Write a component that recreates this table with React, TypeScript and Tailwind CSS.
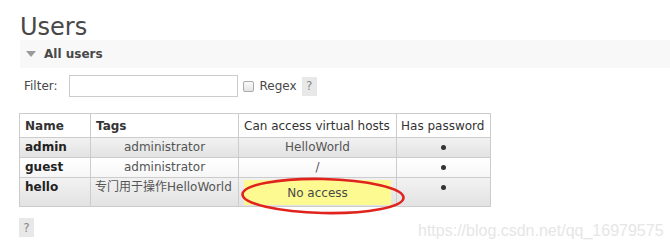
import React from "react";

type UserRow = {
  name: string;
  tags: string;
  vhost: string | null;
  alt: boolean;
};

const users: UserRow[] = [
  { name: "admin", tags: "administrator", vhost: "HelloWorld", alt: true },
  { name: "guest", tags: "administrator", vhost: "/", alt: false },
  { name: "hello", tags: "专门用于操作HelloWorld", vhost: null, alt: true },
];

const font = { fontFamily: '"DejaVu Sans", Verdana, "Noto Sans CJK SC", sans-serif' };

function HelpBox() {
  return (
    <span className="inline-flex h-[19px] w-[15px] items-center justify-center bg-[#e8e8e8] text-[12px] text-[#888]">
      ?
    </span>
  );
}

export default function App() {
  return (
    <div className="relative h-[248px] w-[670px] overflow-hidden bg-white text-[12px] text-[#484848]" style={font}>
      <div className="pl-5 pt-[15px]">
        <h1 className="text-[24px] leading-[25px] text-[#484848]">Users</h1>

        {/* collapsible section header */}
        <div className="flex h-[28px] items-center bg-[#f8f8f8]">
          <svg width="10" height="6" viewBox="0 0 10 6" className="ml-[6px]">
            <polygon points="0,0 10,0 5,6" fill="#9a9a9a" />
          </svg>
          <span className="ml-[8px] text-[12px] font-bold text-[#484848]">All users</span>
        </div>

        {/* filter row */}
        <div className="mt-[7px] flex h-[22px] items-center">
          <span className="ml-[4px] text-[12px]">Filter:</span>
          <input className="ml-[11px] h-[22px] w-[169px] border border-[#ccc] bg-white" />
          <span className="ml-[5px] inline-block h-[11px] w-[11px] rounded-[2px] border border-[#aaa] bg-gradient-to-b from-[#fafafa] to-[#e4e4e4]" />
          <span className="ml-[6px]">Regex</span>
          <span className="ml-[5px] flex">
            <HelpBox />
          </span>
        </div>

        {/* users table */}
        <table className="mt-[16px] -ml-px table-fixed border-collapse text-[12px]">
          <colgroup>
            <col className="w-[71px]" />
            <col className="w-[148px]" />
            <col className="w-[158px]" />
            <col className="w-[94px]" />
          </colgroup>
          <thead>
            <tr className="h-[24px] bg-white">
              <th className="border border-[#ccc] px-[5px] text-left font-bold text-[#333]">Name</th>
              <th className="border border-[#ccc] px-[5px] text-left font-bold text-[#333]">Tags</th>
              <th className="border border-[#ccc] px-[5px] text-left font-normal text-[#333]">Can access virtual hosts</th>
              <th className="border border-[#ccc] px-[4px] text-left font-normal text-[#333]">Has password</th>
            </tr>
          </thead>
          <tbody>
            {users.map((u) => (
              <tr
                key={u.name}
                className={
                  u.alt
                    ? "bg-gradient-to-b from-[#f2f2f2] to-[#e2e2e2]"
                    : "bg-gradient-to-b from-white to-[#f6f6f6]"
                }
              >
                <td className="h-[20px] border border-[#ccc] px-[5px] align-top font-bold leading-[18px] text-[#222]">
                  {u.name}
                </td>
                <td
                  className={
                    "border border-[#ccc] align-top leading-[18px] text-[#555] " +
                    (u.vhost === null ? "px-[4px] text-left" : "px-[5px] text-center")
                  }
                >
                  {u.tags}
                </td>
                <td className="border border-[#ccc] px-[4px] text-center align-top leading-[18px] text-[#555]">
                  {u.vhost === null ? (
                    <div className="mx-px mt-[2px] mb-[1px] flex h-[25px] items-center justify-center bg-[#fcfa90] text-[#484848]">
                      No access
                    </div>
                  ) : (
                    u.vhost
                  )}
                </td>
                <td className="border border-[#ccc] align-top">
                  <div className="flex h-[18px] items-center justify-center">
                    <span className="h-[5px] w-[5px] rounded-full bg-[#333]" />
                  </div>
                </td>
              </tr>
            ))}
          </tbody>
        </table>

        <div className="mt-[11px] -ml-px flex">
          <HelpBox />
        </div>
      </div>

      {/* red annotation ring */}
      <svg className="pointer-events-none absolute left-[238px] top-[175px]" width="172" height="44" viewBox="0 0 172 44">
        <ellipse cx="85" cy="21" rx="80.5" ry="17" fill="none" stroke="#e0231d" strokeWidth="2.6" transform="rotate(1.2 85 21)" />
      </svg>

      {/* blog watermark */}
      <span
        className="pointer-events-none absolute left-[418px] top-[219px] text-[16px] text-[#e6e6e6]"
        style={{ fontFamily: '"Liberation Sans", Arial, sans-serif' }}
      >
        https://blog.csdn.net/qq_16979575
      </span>
    </div>
  );
}
